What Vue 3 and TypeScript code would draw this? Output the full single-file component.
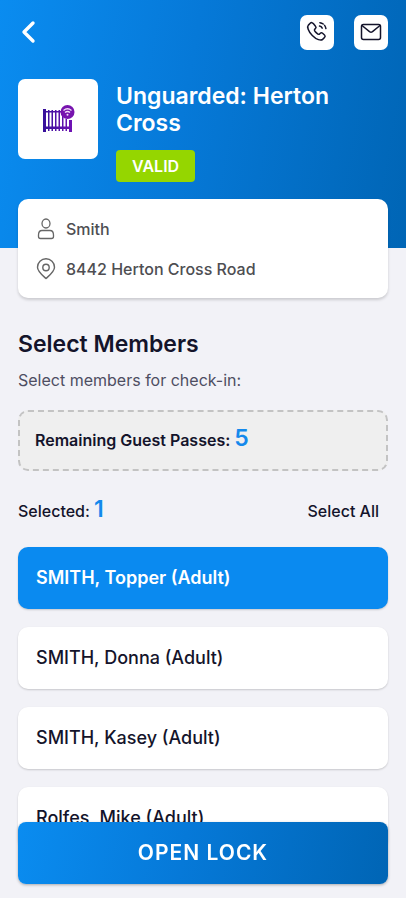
<script setup lang="ts">
import { computed, ref } from 'vue'

interface Member {
  id: number
  name: string
  selected: boolean
}

const members = ref<Member[]>([
  { id: 1, name: 'SMITH, Topper (Adult)', selected: true },
  { id: 2, name: 'SMITH, Donna (Adult)', selected: false },
  { id: 3, name: 'SMITH, Kasey (Adult)', selected: false },
  { id: 4, name: 'Rolfes, Mike (Adult)', selected: false },
])
const guestPasses = ref(5)
const selectedCount = computed(() => members.value.filter((m) => m.selected).length)

function toggle(member: Member): void {
  member.selected = !member.selected
}

function selectAll(): void {
  members.value.forEach((m) => {
    m.selected = true
  })
}
</script>

<template>
  <div class="screen">
    <header class="header">
      <nav class="toolbar">
        <button class="back" type="button" aria-label="Back">
          <svg width="16" height="24" viewBox="0 0 16 24">
            <path d="M13 3 4 12l9 9" fill="none" stroke="#fff" stroke-width="3.4" stroke-linecap="round" stroke-linejoin="round" />
          </svg>
        </button>
        <div class="actions">
          <button class="action" type="button" aria-label="Call">
            <svg width="22" height="22" viewBox="0 0 22 22" fill="none" stroke="#14142b" stroke-width="1.5" stroke-linecap="round" stroke-linejoin="round">
              <path d="M4.2 2.3 2.4 4.1c-1.5 1.6-.4 5.9 3.9 10.300s8.700 5.500 10.300 4l1.900-1.900c.8-.8.8-1.700 0-2.500l-1.900-1.700c-.8-.7-1.600-.7-2.300 0l-.9.900c-.6.5-1.800-.2-3.200-1.600S8.100 9 8.600 8.400l.9-.9c.7-.7.7-1.500 0-2.300L7.500 2.700c-1-1.200-2.200-1.500-3.300-.4Z" />
              <path d="M13.5 5.100c1.700.4 2.700 1.500 3.100 3.100M13.900 1.700c3.300.5 5.500 2.600 6 5.900" stroke-dasharray="3.500 2" />
            </svg>
          </button>
          <button class="action" type="button" aria-label="Email">
            <svg width="22" height="20" viewBox="0 0 22 20" fill="none" stroke="#14142b" stroke-width="1.5" stroke-linecap="round" stroke-linejoin="round">
              <rect x="1.5" y="2.5" width="19" height="15" rx="2" />
              <path d="m2 3.500 7.800 6.300c.7.600 1.700.6 2.400 0L20 3.500" />
            </svg>
          </button>
        </div>
      </nav>
      <div class="facility">
        <div class="thumb">
          <svg width="34" height="30" viewBox="0 0 34 30">
            <defs>
              <linearGradient id="fence" x1="0" y1="0" x2="1" y2="0">
                <stop offset="0" stop-color="#35109a" />
                <stop offset="1" stop-color="#7012b4" />
              </linearGradient>
            </defs>
            <path fill="url(#fence)" d="M2 5h3v23H2zM28 16h3v12h-3zM5 7h17v1.500H5zM5 22.500h23V25H5zM7 6h1.500v21H7zM10.500 6H12v21h-1.500zM14 6h1.500v21H14zM17.500 6H19v21h-1.500zM21 11h1.500v16H21zM24.500 15H26v12h-1.500z" />
            <circle cx="26.500" cy="8" r="7" fill="#7714ae" />
            <path d="M22.500 6.400c2.400-2 5.600-2 8 0M24 8.500c1.500-1.200 3.500-1.200 5 0" fill="none" stroke="#f4dff9" stroke-width="1.3" />
            <circle cx="26.500" cy="10.700" r="1" fill="#f4dff9" />
          </svg>
        </div>
        <div class="heading">
          <h1>Unguarded: Herton Cross</h1>
          <span class="badge">VALID</span>
        </div>
      </div>
    </header>

    <section class="details">
      <div class="detail">
        <svg width="20" height="22" viewBox="0 0 20 22" fill="none" stroke="#666" stroke-width="1.3">
          <ellipse cx="10" cy="5.500" rx="4" ry="4.500" />
          <path d="M6 12.500h8c2.500 0 3.500 2 3.500 4.500v1.500c0 1.200-.8 2-2 2h-11c-1.200 0-2-.8-2-2V17c0-2.500 1-4.500 3.500-4.500Z" />
        </svg>
        <span>Smith</span>
      </div>
      <div class="detail">
        <svg width="20" height="22" viewBox="0 0 20 22" fill="none" stroke="#666" stroke-width="1.4" stroke-linejoin="round">
          <path d="M10 20.500c-2-1.900-8.500-6.600-8.500-11.200a8.500 8.500 0 0 1 17 0c0 4.600-6.500 9.300-8.500 11.200Z" />
          <circle cx="10" cy="9.500" r="3.200" />
        </svg>
        <span>8442 Herton Cross Road</span>
      </div>
    </section>

    <main class="content">
      <h2>Select Members</h2>
      <p class="hint">Select members for check-in:</p>
      <div class="passes">
        Remaining Guest Passes: <strong class="count">{{ guestPasses }}</strong>
      </div>
      <div class="summary">
        <span>Selected: <strong class="count">{{ selectedCount }}</strong></span>
        <button class="select-all" type="button" @click="selectAll">Select All</button>
      </div>
      <ul class="members">
        <li v-for="member in members" :key="member.id">
          <button
            class="member"
            :class="{ selected: member.selected }"
            type="button"
            :aria-pressed="member.selected"
            @click="toggle(member)"
          >
            {{ member.name }}
          </button>
        </li>
      </ul>
    </main>

    <footer class="footer">
      <button class="open" type="button">OPEN LOCK</button>
    </footer>
  </div>
</template>

<style>
body {
  background: #fff;
}
</style>

<style scoped>
.screen {
  height: calc(100vh - 2px);
  overflow-y: auto;
  scrollbar-width: none;
  background: #f2f2f7;
  color: #14142b;
  font-family: Inter, sans-serif;
  font-size: 16px;
  line-height: 20px;
}
button {
  margin: 0;
  padding: 0;
  border: 0;
  background: none;
  color: inherit;
  font: inherit;
  cursor: pointer;
}
svg {
  display: block;
  flex: none;
}
.header {
  padding: 14px 18px 66px;
  background: linear-gradient(100deg, #0a8cf0 0%, #0679d8 45%, #0065b5 100%);
  color: #fff;
}
.toolbar,
.actions,
.facility,
.detail,
.summary {
  display: flex;
  align-items: center;
}
.toolbar,
.summary {
  justify-content: space-between;
}
.back {
  padding: 6px 2px;
}
.actions {
  gap: 20px;
}
.action {
  display: grid;
  place-items: center;
  width: 34px;
  height: 35px;
  border-radius: 7px;
  background: #fff;
}
.facility {
  align-items: flex-start;
  gap: 18px;
  margin-top: 29px;
}
.thumb {
  display: grid;
  flex: none;
  place-items: center;
  width: 80px;
  height: 80px;
  border-radius: 7px;
  background: #fff;
}
.heading {
  padding-top: 4px;
}
h1 {
  margin: 0 0 13px;
  font-size: 23px;
  font-weight: 600;
  line-height: 27px;
}
.badge {
  display: block;
  width: fit-content;
  padding: 6px 16px;
  border-radius: 4px;
  background: #95d600;
  font-weight: 600;
}
.details {
  position: relative;
  display: grid;
  gap: 18px;
  margin: -49px 18px 0;
  padding: 19px 18px 18px;
  border-radius: 10px;
  background: #fff;
  box-shadow: 0 2px 3px rgba(0, 0, 0, 0.16);
  color: #4e4e52;
  font-weight: 500;
}
.detail {
  gap: 10px;
}
.content {
  padding: 32px 18px 92px;
}
h2 {
  margin: 0;
  font-size: 23px;
  font-weight: 600;
  line-height: 28px;
}
.hint {
  margin: 12px 0 20px;
  color: #4e4e62;
}
.passes {
  padding: 13px 15px;
  border: 2px dashed #c3c3c3;
  border-radius: 10px;
  background: #efefef;
  font-weight: 600;
  line-height: 31px;
}
.count {
  color: #1489ec;
  font-size: 23px;
  font-weight: 600;
  line-height: 1;
}
.summary {
  padding: 26px 9px 22px 0;
  font-weight: 500;
  line-height: 28px;
}
.members {
  display: grid;
  gap: 18px;
  margin: 0;
  padding: 0;
  list-style: none;
}
.member {
  display: block;
  width: 100%;
  padding: 20px 18px;
  border-radius: 10px;
  background: #fff;
  box-shadow: 0 1px 2px rgba(0, 0, 0, 0.18);
  font-size: 18px;
  font-weight: 500;
  line-height: 22px;
  text-align: left;
}
.member.selected {
  background: #0a8af0;
  color: #fff;
  font-weight: 600;
}
.footer {
  position: sticky;
  bottom: 0;
  padding: 0 18px 14px;
}
.open {
  width: 100%;
  padding: 18px;
  border-radius: 8px;
  background: linear-gradient(100deg, #0a8cf0 0%, #0679d8 45%, #0065b5 100%);
  box-shadow: 0 1px 3px rgba(0, 0, 0, 0.3);
  color: #fff;
  font-size: 21px;
  font-weight: 600;
  line-height: 26px;
  letter-spacing: 1px;
}
</style>
